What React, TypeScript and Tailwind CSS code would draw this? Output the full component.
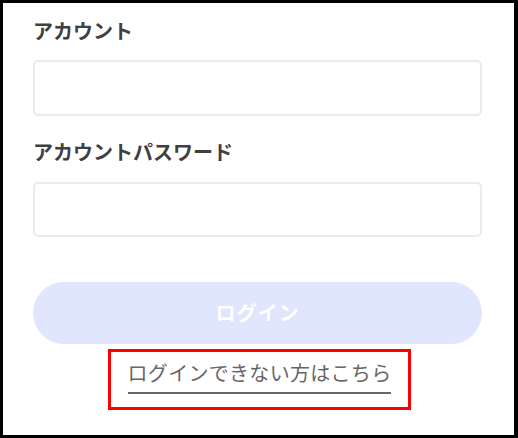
import React from "react";

const font = { fontFamily: '"Noto Sans CJK JP", "Noto Sans", sans-serif' };

export default function App() {
  return (
    <div
      className="w-[518px] h-[438px] box-border bg-white border-black border-l-[3px] border-t-[3px] border-r-[4px] border-b-[3px] pl-[30px] pr-[32px] pt-[14px] flex flex-col"
      style={font}
    >
      <div className="text-[20px] leading-[28px] font-bold text-[#404040]">アカウント</div>
      <input
        className="mt-[15px] h-[56px] w-full rounded-[5px] border-2 border-[#ebebeb] bg-white outline-none"
        type="text"
      />
      <div className="mt-[22px] text-[20px] leading-[28px] font-bold text-[#404040]">アカウントパスワード</div>
      <input
        className="mt-[16px] h-[55px] w-full rounded-[5px] border-2 border-[#ebebeb] bg-white outline-none"
        type="password"
      />
      <button className="mt-[45px] h-[62px] w-full rounded-full bg-[#dfe6fd] text-white text-[20px] font-bold tracking-[1px]">
        ログイン
      </button>
      <div className="mt-[5px] flex justify-center">
        <div className="ml-[4px] w-[303px] h-[61px] border-[3px] border-[#ff0000] box-border flex items-start justify-center pt-[7px]">
          <span className="text-[20px] leading-[28px] text-[#666666] border-b-2 border-[#666666] pb-[5px] tracking-[0.3px]">
            ログインできない方はこちら
          </span>
        </div>
      </div>
    </div>
  );
}
